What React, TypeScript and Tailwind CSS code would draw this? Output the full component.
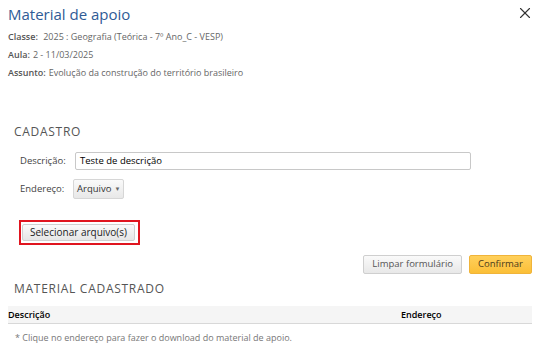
import { X } from "lucide-react";

const font = { fontFamily: '"Open Sans", "Liberation Sans", sans-serif' };

const Info = ({ label, value }: { label: string; value: string }) => (
  <div className="flex h-[18px] items-center gap-[3px] text-[9px] text-[#666]">
    <span className="font-semibold text-[#555]">{label}</span>
    <span>{value}</span>
  </div>
);

const App = () => {
  return (
    <div className="h-[349px] w-[539px] overflow-hidden bg-white" style={font}>
      <div className="flex items-start justify-between pl-2 pr-[5px] pt-[3px]">
        <h1 className="text-[15px] leading-[22px] text-[#2f5b96]">Material de apoio</h1>
        <X className="mt-[1px] h-[18px] w-[18px] text-[#333]" strokeWidth={1.5} />
      </div>

      <div className="mt-[3px] pl-2">
        <Info label="Classe:" value="&nbsp;2025 : Geografia (Teórica - 7º Ano_C - VESP)" />
        <Info label="Aula:" value="2 - 11/03/2025" />
        <Info label="Assunto:" value="Evolução da construção do território brasileiro" />
      </div>

      <h2 className="mt-[42px] pl-[14px] text-[12px] leading-[16px] tracking-[0.06em] text-[#555]">
        CADASTRO
      </h2>

      <div className="mt-[12px] flex items-center pl-[20px] text-[9.5px] text-[#444]">
        <span className="w-[55px]">Descrição:</span>
        <div className="flex h-[18px] w-[396px] items-center rounded-[2px] border border-[#c8c8c8] px-[4px] text-[9.5px] text-black">
          Teste de descrição
        </div>
      </div>

      <div className="mt-[9px] flex items-center pl-[20px] text-[9.5px] text-[#444]">
        <span className="w-[53px]">Endereço:</span>
        <div className="flex h-[20px] items-center gap-[3px] rounded-[2px] border border-[#d6d6d6] bg-gradient-to-b from-[#fafafa] to-[#e8e8e8] px-[3px] text-[#333]">
          Arquivo
          <span className="text-[6px] text-[#666]">▼</span>
        </div>
      </div>

      <div className="ml-[19px] mt-[21px] inline-flex border-2 border-[#e0151f] py-[2px] pl-[1px] pr-[3px]">
        <div className="flex h-[17px] items-center rounded-[2px] border border-[#d0d0d0] bg-gradient-to-b from-[#fafafa] to-[#e6e6e6] px-[7px] text-[10px] text-[#222]">
          Selecionar arquivo(s)
        </div>
      </div>

      <div className="mt-[10px] flex justify-end gap-[7px] pr-[7px]">
        <div className="flex h-[19px] items-center rounded-[2px] border border-[#cfcfcf] bg-gradient-to-b from-[#fafafa] to-[#e8e8e8] px-[8px] text-[9.5px] text-[#555]">
          Limpar formulário
        </div>
        <div className="flex h-[19px] items-center rounded-[2px] border border-[#f0b43a] bg-gradient-to-b from-[#ffd05a] to-[#fbbf36] px-[8px] text-[9.5px] text-[#4a3a1a]">
          Confirmar
        </div>
      </div>

      <h2 className="mt-[7px] pl-[14px] text-[12px] leading-[16px] tracking-[0.06em] text-[#555]">
        MATERIAL CADASTRADO
      </h2>

      <div className="ml-2 mr-[7px] mt-[9px] grid h-[18px] grid-cols-[393px_1fr] items-center border-b border-[#d8d8d8] bg-[#f5f5f5] text-[9px] font-semibold text-black">
        <span>Descrição</span>
        <span>Endereço</span>
      </div>

      <p className="mt-[7px] pl-[15px] text-[9px] text-[#777]">
        * Clique no endereço para fazer o download do material de apoio.
      </p>
    </div>
  );
};

export default App;
